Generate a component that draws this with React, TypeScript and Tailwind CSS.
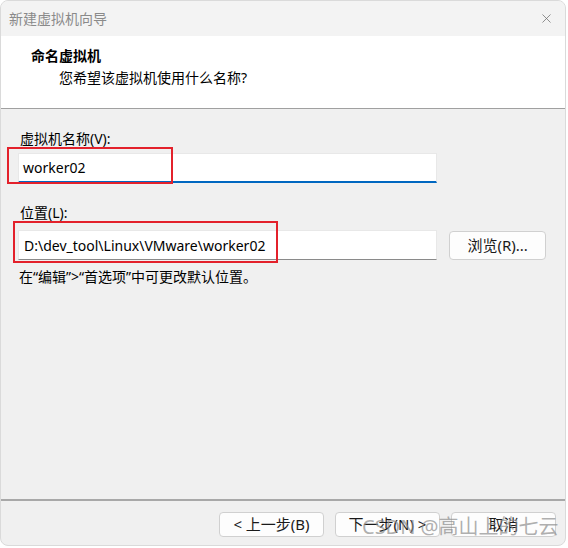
import { X } from 'lucide-react';

const FONT = '"Noto Sans", "Noto Sans CJK SC", sans-serif';

function WinButton({ children, className = '' }: { children: React.ReactNode; className?: string }) {
  return (
    <button
      className={`h-[25px] rounded-[4px] border border-[#d0d0d0] bg-[#fdfdfd] text-[15px] text-[#1a1a1a] leading-none flex items-center justify-center ${className}`}
    >
      {children}
    </button>
  );
}

export default function App() {
  return (
    <div className="w-[568px] h-[548px] bg-white" style={{ fontFamily: FONT }}>
      <div className="relative w-[566px] h-[546px] rounded-[8px] overflow-hidden bg-[#f0f0f0] border border-[#dadada] flex flex-col">
        {/* title bar */}
        <div className="h-[35px] flex items-center justify-between pl-[8px] pr-[11px] bg-[#f3f3f3]">
          <span className="text-[14px] text-[#8a8a8a]">新建虚拟机向导</span>
          <X className="w-[15px] h-[15px] text-[#6e6e6e]" strokeWidth={1.2} />
        </div>

        {/* header */}
        <div className="h-[73px] bg-white border-b border-[#a0a0a0] pl-[30px] pt-[10px]">
          <div className="text-[14px] font-bold text-black leading-[20px]">命名虚拟机</div>
          <div className="text-[14px] text-black leading-[20px] mt-[2px] pl-[28px]">您希望该虚拟机使用什么名称?</div>
        </div>

        {/* body */}
        <div className="flex-1 flex flex-col pl-[17px] pr-[19px] pt-[20px]">
          <div className="text-[14px] leading-[20px] text-black pl-[2px]">虚拟机名称(V):</div>
          <div className="mt-[4px] w-[419px] h-[30px] bg-white border border-[#e8e8e8] border-b-2 border-b-[#0067c0] flex items-center pl-[4px] text-[14px] text-black">
            worker02
          </div>

          <div className="mt-[20px] text-[14px] leading-[20px] text-black pl-[2px]">位置(L):</div>
          <div className="mt-[7px] flex items-center gap-[12px]">
            <div className="w-[420px] h-[30px] bg-white border border-[#e8e8e8] border-b-[#8a8a8a] flex items-center pl-[5px] text-[14px] text-black">
              D:\dev_tool\Linux\VMware\worker02
            </div>
            <WinButton className="w-[97px] h-[29px]">浏览(R)...</WinButton>
          </div>
          <div className="mt-[7px] text-[14px] leading-[20px] text-black pl-[1px]">在“编辑”&gt;“首选项”中可更改默认位置。</div>

          <div className="flex-1" />
        </div>

        {/* footer */}
        <div className="h-[46px] border-t-2 border-[#a8a8a8] flex items-start justify-end gap-[11px] pr-[9px] pt-[11px]">
          <WinButton className="w-[105px]">&lt; 上一步(B)</WinButton>
          <WinButton className="w-[105px]">下一步(N) &gt;</WinButton>
          <WinButton className="w-[105px]">取消</WinButton>
        </div>

        {/* red annotation boxes */}
        <div className="absolute left-[6px] top-[146px] w-[166px] h-[37px] border-2 border-[#e3212b]" />
        <div className="absolute left-[12px] top-[220px] w-[265px] h-[42px] border-2 border-[#e3212b]" />

        {/* watermark */}
        <div className="absolute left-[361px] top-[512px] text-[20px] leading-[28px] text-[#8c8c8c]/70 whitespace-nowrap">
          CSDN @高山上的七云
        </div>
      </div>
    </div>
  );
}
